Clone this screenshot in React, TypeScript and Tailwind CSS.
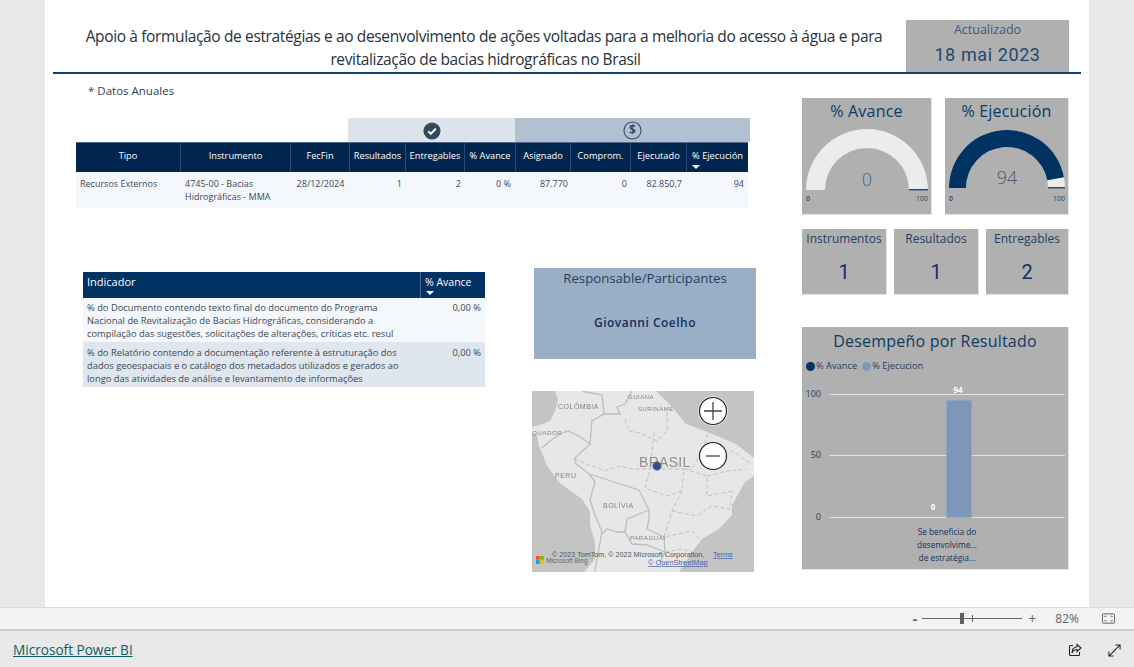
import React from "react";

const OS = "font-['Open_Sans','Noto_Sans',sans-serif]";

function Gauge({ value, title, cls, R, r, cy }: { value: number; title: string; cls: string; R: number; r: number; cy: number }) {
  const cx = R;
  const pt = (rad: number, f: number) => {
    const a = Math.PI * (1 - f);
    return `${cx + rad * Math.cos(a)} ${cy - rad * Math.sin(a)}`;
  };
  const f = value / 100;
  return (
    <div className={`${cls} h-[117px] bg-[#b0b0b0] border-r border-b border-[#e4e4e4] flex flex-col items-center pt-[1px]`}>
      <div className="text-[16px] leading-[24px] text-[#0b3a66] tracking-[0.2px]">{title}</div>
      <svg viewBox={`0 0 ${2 * R} 88`} className="mt-[1px] overflow-visible" width={2 * R} height={88}>
        <path d={`M${pt(R, 0)} A${R} ${R} 0 0 1 ${pt(R, 1)} L${pt(r, 1)} A${r} ${r} 0 0 0 ${pt(r, 0)} Z`} fill="#ececec" />
        {f > 0 && (
          <path d={`M${pt(R, 0)} A${R} ${R} 0 0 1 ${pt(R, f)} L${pt(r, f)} A${r} ${r} 0 0 0 ${pt(r, 0)} Z`} fill="#003262" />
        )}
        <rect x={cx + r} y={cy - 1} width={R - r} height={1.4} fill="#1d4a80" />
        <text x={cx} y={cy - 4} textAnchor="middle" fontSize="18" fill={value ? "#4a5a6a" : "#2f6c9c"} fontWeight="300">{value}</text>
        <text x="0" y="77" fontSize="7" fill="#2b4560" fontWeight="600">0</text>
        <text x={2 * R} y="77" textAnchor="end" fontSize="7" fill="#2b4560">100</text>
      </svg>
    </div>
  );
}

function Card({ label, n, cls }: { label: string; n: number; cls: string }) {
  return (
    <div className={`${cls} h-[66px] bg-[#b0b0b0] border-r border-b border-[#e4e4e4] flex flex-col items-center`}>
      <div className="text-[12px] leading-[18px] mt-[1px] text-[#1f3f63]">{label}</div>
      <div className="text-[20px] leading-[26px] mt-[11px] text-[#12305c] font-['Roboto',sans-serif]">{n}</div>
    </div>
  );
}

const Sort = () => (
  <svg viewBox="0 0 8 4" className="w-[8px] h-[4px] absolute left-[5px] bottom-[3px]">
    <path d="M0 0H8L4 4Z" fill="#fff" />
  </svg>
);

const HEADS: [string, string][] = [
  ["Tipo", "w-[105px] text-center"],
  ["Instrumento", "w-[110px] text-center"],
  ["FecFin", "w-[59px] text-center"],
  ["Resultados", "w-[56px] text-center"],
  ["Entregables", "w-[59px] text-center"],
  ["% Avance", "w-[51px] text-center"],
  ["Asignado", "w-[55px] text-center"],
  ["Comprom.", "w-[60px] text-center"],
  ["Ejecutado", "w-[56px] text-center"],
  ["% Ejecución", "w-[61px] text-center relative"],
];

function MainTable() {
  return (
    <div className="w-[674px] text-[9px]">
      <div className="flex h-[24px] pl-[272px]">
        <div className="w-[167px] bg-[#dde3eb] flex items-center justify-center">
          <svg viewBox="0 0 20 20" className="w-[18px] h-[18px] mt-[1px]">
            <circle cx="10" cy="10" r="9.5" fill="#36495c" />
            <path d="M5.8 10.4l2.9 2.7 5.6-5.7" fill="none" stroke="#fff" strokeWidth="2.2" />
          </svg>
        </div>
        <div className="w-[235px] bg-[#b2c1d1] flex items-center justify-center">
          <svg viewBox="0 0 20 20" className="w-[19px] h-[19px] mt-[1px]">
            <circle cx="10" cy="10" r="9" fill="none" stroke="#36495c" strokeWidth="1.1" />
            <text x="10" y="14.2" textAnchor="middle" fontSize="12.5" fontWeight="700" fill="#36495c">$</text>
          </svg>
        </div>
      </div>
      <div className="flex h-[30px] bg-[#00264f] text-white text-[9.25px] border-t border-[#50688a] w-[672px]">
        {HEADS.map(([h, c]) => (
          <div key={h} className={`${c} shrink-0 border-r border-[#2a4a73] leading-[25px] whitespace-nowrap last:border-r-0`}>
            {h}
            {h === "% Ejecución" && <Sort />}
          </div>
        ))}
      </div>
      <div className="flex h-[36px] bg-[#f4f7fc] text-[#3d4a58] w-[672px] leading-[13px] pt-[5px]">
        <div className="w-[105px] pl-[4px] shrink-0">Recursos Externos</div>
        <div className="w-[110px] pl-[4px] shrink-0">4745-00 - Bacias<br />Hidrográficas - MMA</div>
        <div className="w-[59px] text-center shrink-0 whitespace-nowrap">28/12/2024</div>
        <div className="w-[56px] text-right pr-[4px] shrink-0">1</div>
        <div className="w-[59px] text-right pr-[4px] shrink-0">2</div>
        <div className="w-[51px] text-right pr-[5px] shrink-0">0 %</div>
        <div className="w-[55px] text-right pr-[3px] shrink-0">87.770</div>
        <div className="w-[60px] text-right pr-[4px] shrink-0">0</div>
        <div className="w-[56px] text-right pr-[5px] shrink-0">82.850,7</div>
        <div className="w-[61px] text-right pr-[4px] shrink-0">94</div>
      </div>
    </div>
  );
}

function IndicatorTable() {
  return (
    <div className="w-[402px] mt-[64px] ml-[7px] text-[9.35px] leading-[13px]">
      <div className="flex h-[26px] bg-[#003263] text-white text-[10.5px] leading-[20px]">
        <div className="w-[338px] pl-[4px] text-[11px] border-r border-[#4b6a90]">Indicador</div>
        <div className="flex-1 pl-[4px] relative whitespace-nowrap">% Avance<Sort /></div>
      </div>
      <div className="flex h-[44px] bg-[#f4f7fc] text-[#3d4a58] pt-[3px]">
        <div className="w-[338px] pl-[4px] whitespace-nowrap">% do Documento contendo texto final do documento do Programa<br />Nacional de Revitalização de Bacias Hidrográficas, considerando a<br />compilação das sugestões, solicitações de alterações, críticas etc. resul</div>
        <div className="flex-1 text-right pr-[4px]">0,00 %</div>
      </div>
      <div className="flex h-[45px] bg-[#e0e6ee] text-[#3d4a58] pt-[4px]">
        <div className="w-[338px] pl-[4px] whitespace-nowrap">% do Relatório contendo a documentação referente à estruturação dos<br />dados geoespaciais e o catálogo dos metadados utilizados e gerados ao<br />longo das atividades de análise e levantamento de informações</div>
        <div className="flex-1 text-right pr-[4px]">0,00 %</div>
      </div>
    </div>
  );
}

function MapVisual() {
  const label = { fill: "#828282", fontSize: 7, letterSpacing: 0.5, fontFamily: "Liberation Sans" };
  return (
    <svg viewBox="0 0 222 181" className="w-[222px] h-[181px] ml-[-2px] mt-[32px] block bg-[#c4c4c4]">
      <g className="blur-[0.35px]">
        <path d="M23 0L26 10L23 20L18 30L8 34L0 36V42L5 44L7 55L10 62L15 75L27 91L37 99L50 108L58 121L58 134L63 151L63 168L52 181H147L160 161L170 148L187 138L200 124L200 114L213 91L222 85V67L204 53L178 42L154 33L141 17L124 0Z" fill="#e7e7e7" />
        <g fill="none" stroke="#bdbdbd" strokeWidth="1.3">
          <path d="M10 57L18 50L28 43L36 40L47 45L58 53L60 30L72 23L88 23L85 16L93 13L100 0" />
          <path d="M50 0L70 4L72 23" />
          <path d="M58 53L43 67L43 72L57 83L73 88L82 91L107 99L117 119L117 128L115 138L132 146L133 161L128 171" />
          <path d="M57 83L63 91L58 109L63 124L70 141L65 168L63 181" />
          <path d="M117 119L95 128L93 141L85 141L75 138L70 143" />
          <path d="M93 141L100 153L115 154L133 161" />
        </g>
        <g fill="none" stroke="#b6b6b6" strokeWidth="0.8" strokeDasharray="4 2.5">
          <path d="M42 68L73 80L88 75L100 78L125 78L160 78L170 60L176 42" />
          <path d="M93 28L97 40L108 42L125 50L135 40L135 20" />
          <path d="M122 42L118 78L113 97L135 105L150 100L152 78" />
          <path d="M150 100L140 120L132 146L160 140L167 148" />
          <path d="M140 120L165 125L180 115L198 118L200 100" />
          <path d="M152 78L175 85L175 105L200 100" />
          <path d="M170 60L190 68L200 60L218 72" />
          <path d="M175 85L195 80L215 78" />
          <path d="M133 161L150 158L160 161" />
        </g>
        <text x="26" y="18" {...label}>COLÔMBIA</text>
        <text x="96" y="8" {...label} fontSize="6">GUIANA</text>
        <text x="106" y="20" {...label} fontSize="6">SURINAME</text>
        <text x="0" y="44" {...label} fontSize="6.2">QUADOR</text>
        <text x="23" y="87" {...label}>PERU</text>
        <text x="71" y="117" {...label}>BOLÍVIA</text>
        <text x="98" y="149" {...label} fontSize="6.2">PARAGUAI</text>
        <text x="107" y="76" fill="#8e8e8e" fontSize="14" letterSpacing="0.3" fontFamily="Liberation Sans">BRASIL</text>
      </g>
      <circle cx="125" cy="75" r="4.3" fill="#2f5280" stroke="#75869d" strokeWidth="0.8" />
      <circle cx="181" cy="20" r="15" fill="#e4e4e4" />
      <circle cx="181" cy="20" r="13.5" fill="#fff" stroke="#1c1c1c" strokeWidth="1.1" />
      <path d="M172 20H190M181 11V29" stroke="#444" strokeWidth="1.3" />
      <circle cx="181" cy="65" r="15" fill="#e4e4e4" />
      <circle cx="181" cy="65" r="13.5" fill="#fff" stroke="#1c1c1c" strokeWidth="1.1" />
      <path d="M174 65H188" stroke="#444" strokeWidth="1.3" />
      <rect x="4" y="165" width="3.7" height="3.7" fill="#f25022" />
      <rect x="8.2" y="165" width="3.7" height="3.7" fill="#7fba00" />
      <rect x="4" y="169.2" width="3.7" height="3.7" fill="#00a4ef" />
      <rect x="8.2" y="169.2" width="3.7" height="3.7" fill="#ffb900" />
      <g fontFamily="Liberation Sans">
        <text x="14" y="172" fill="#666" fontSize="6.6">Microsoft Bing</text>
        <text x="20" y="166" fill="#555" fontSize="7.2">© 2023 TomTom, © 2023 Microsoft Corporation,</text>
        <text x="181" y="166" fill="#4a5fa8" fontSize="7.2" textDecoration="underline">Terms</text>
        <text x="116" y="174" fill="#4a5fa8" fontSize="7.4" textDecoration="underline">© OpenStreetMap</text>
      </g>
    </svg>
  );
}

function BarChart() {
  return (
    <div className="h-[243px] bg-[#b0b0b0] border-r border-b border-[#e4e4e4] flex flex-col">
      <div className="text-[16px] leading-[26px] text-center text-[#12385f] mt-[1px] tracking-[0.2px]">Desempeño por Resultado</div>
      <div className="flex items-center text-[9.3px] text-[#1f3f63] h-[14px] mt-[5px] pl-[4px] gap-[1px]">
        <span className="w-[9px] h-[9px] rounded-full bg-[#003263]" />
        <span className="mr-[4px]">% Avance</span>
        <span className="w-[9px] h-[9px] rounded-full bg-[#7f98b8]" />
        <span>% Ejecucion</span>
      </div>
      <svg viewBox="0 0 266 194" className="w-[266px] h-[194px] block">
        <g stroke="#e2e2e2" strokeWidth="1">
          <line x1="27" x2="263" y1="21.5" y2="21.5" />
          <line x1="27" x2="263" y1="82.5" y2="82.5" />
          <line x1="27" x2="263" y1="144.5" y2="144.5" />
        </g>
        <rect x="144.5" y="27.5" width="25" height="117" fill="#7e97b8" stroke="#91a6c2" strokeWidth="0.8" />
        <g fontSize="9" fill="#1f3f63" textAnchor="end">
          <text x="19" y="24">100</text>
          <text x="19" y="85">50</text>
          <text x="19" y="147">0</text>
        </g>
        <g fontSize="8" fill="#fff" fontWeight="700" textAnchor="middle">
          <text x="156" y="20">94</text>
          <text x="131" y="137">0</text>
        </g>
        <g fontSize="8.3" fill="#12305c" textAnchor="middle">
          <text x="145" y="162">Se beneficia do</text>
          <text x="145" y="175">desenvolvime...</text>
          <text x="145" y="188">de estratégia...</text>
        </g>
      </svg>
    </div>
  );
}

export default function App() {
  return (
    <div className={`${OS} w-[1134px] h-[667px] bg-[#e9e9e9] flex flex-col overflow-hidden`}>
      <div className="h-[607px] mx-[45px] bg-white shrink-0 flex flex-col">
        {/* header */}
        <div className="flex items-end h-[74px] ml-[8px] mr-[8px] border-b-[2px] border-[#0f4472] shrink-0">
          <div className="w-[853px] text-center text-[15.5px] leading-[23px] text-[#27313c] pb-[1px] pl-[9px] whitespace-nowrap tracking-[-0.36px]">
            <div>Apoio à formulação de estratégias e ao desenvolvimento de ações voltadas para a melhoria do acesso à água e para</div>
            <div className="pl-[3px]">revitalização de bacias hidrográficas no Brasil</div>
          </div>
          <div className="w-[163px] h-[52px] bg-[#b0b0b0] flex flex-col items-center">
            <div className="text-[12.5px] leading-[18px] mt-[1px] text-[#355a82]">Actualizado</div>
            <div className="text-[18px] leading-[24px] mt-[4px] text-[#1d4872] font-['Roboto',sans-serif] tracking-[0.6px]">18 mai 2023</div>
          </div>
        </div>
        {/* body */}
        <div className="flex flex-1 pl-[31px]">
          <div className="w-[726px] shrink-0">
            <div className="pl-[12px] mt-[9px] text-[11.5px] leading-[16px] text-[#36404c] h-[35px]">* Datos Anuales</div>
            <MainTable />
            <div className="flex">
              <IndicatorTable />
              <div className="ml-[49px] mt-[60px] w-[224px]">
                <div className="w-[222px] h-[91px] bg-[#9aafc6] flex flex-col items-center">
                  <div className="text-[13.2px] leading-[18px] mt-[1px] text-[#1f3f63]">Responsable/Participantes</div>
                  <div className="text-[12px] leading-[16px] mt-[28px] font-semibold text-[#12305c] tracking-[0.5px]">Giovanni Coelho</div>
                </div>
                <MapVisual />
              </div>
            </div>
          </div>
          <div className="w-[267px] shrink-0 pt-[24px]">
            <div className="flex justify-between">
              <Gauge value={0} title="% Avance" cls="w-[130px]" R={61} r={42} cy={66} />
              <Gauge value={94} title="% Ejecución" cls="w-[124px]" R={58} r={41} cy={64} />
            </div>
            <div className="flex justify-between mt-[14px]">
              <Card label="Instrumentos" n={1} cls="w-[85px]" />
              <Card label="Resultados" n={1} cls="w-[85px]" />
              <Card label="Entregables" n={2} cls="w-[83px]" />
            </div>
            <div className="mt-[32px]">
              <BarChart />
            </div>
          </div>
        </div>
      </div>
      {/* status bar */}
      <div className="h-[24px] bg-[#f3f3f3] border-t border-[#dcdcdc] border-b-2 border-b-[#cdcdcd] shrink-0 flex items-center justify-end text-[#666]">
        <span className="text-[15px] leading-none font-bold mr-[5px]">-</span>
        <div className="relative w-[100px] h-[1.5px] bg-[#666] mr-[6px]">
          <div className="absolute left-[38px] top-[-5px] w-[4px] h-[11px] bg-[#5f5f5f]" />
          <div className="absolute left-[50px] top-[-3px] w-[1px] h-[7px] bg-[#666]" />
        </div>
        <span className="text-[14px] leading-none mr-[19px]">+</span>
        <span className="text-[12px] mr-[23px]">82%</span>
        <svg viewBox="0 0 14 11" className="w-[13px] h-[11px] mr-[19px]" fill="none" stroke="#555">
          <rect x="0.5" y="0.5" width="13" height="10" rx="1" />
          <path d="M3 4V3H5M9 3H11V4M3 7V8H5M9 8H11V7" strokeWidth="0.8" />
        </svg>
      </div>
      {/* footer */}
      <div className="flex-1 flex items-center px-[13px] pt-[2px]">
        <a className="text-[13.6px] text-[#0d5e63] underline pt-[1px]">Microsoft Power BI</a>
        <div className="ml-auto flex items-center gap-[26px]">
          <svg viewBox="0 0 14 14" className="w-[14px] h-[14px]" fill="none" stroke="#222" strokeWidth="1.1">
            <path d="M5 2.5H2.5A1 1 0 0 0 1.5 3.5V11.5A1 1 0 0 0 2.5 12.5H10.5A1 1 0 0 0 11.5 11.5V9" />
            <path d="M9 1.5L13 5L9 8.5V6.5C6.5 6.5 5 7.5 4 10C4 6.5 6 4 9 3.7Z" />
          </svg>
          <svg viewBox="0 0 14 14" className="w-[13px] h-[13px]" fill="none" stroke="#222" strokeWidth="1.1">
            <path d="M1 13L13 1M8 1H13V6M1 8V13H6" />
          </svg>
        </div>
      </div>
    </div>
  );
}
